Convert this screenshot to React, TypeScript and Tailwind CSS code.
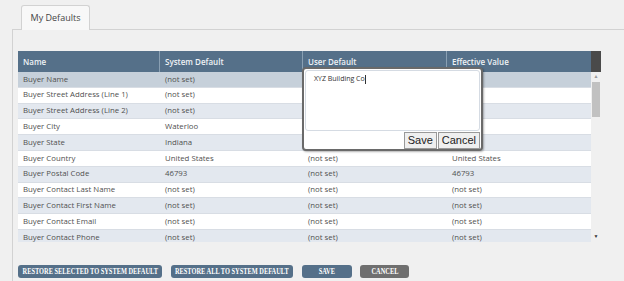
import React from "react";

const ROWS = [
  ["Buyer Name", "(not set)", "", ""],
  ["Buyer Street Address (Line 1)", "(not set)", "", ""],
  ["Buyer Street Address (Line 2)", "(not set)", "", ""],
  ["Buyer City", "Waterloo", "", ""],
  ["Buyer State", "Indiana", "", ""],
  ["Buyer Country", "United States", "(not set)", "United States"],
  ["Buyer Postal Code", "46793", "(not set)", "46793"],
  ["Buyer Contact Last Name", "(not set)", "(not set)", "(not set)"],
  ["Buyer Contact First Name", "(not set)", "(not set)", "(not set)"],
  ["Buyer Contact Email", "(not set)", "(not set)", "(not set)"],
  ["Buyer Contact Phone", "(not set)", "(not set)", "(not set)"],
];

const COLS = ["Name", "System Default", "User Default", "Effective Value"];
const WIDTHS = ["w-[142px]", "w-[143px]", "w-[144px]", "w-[144px]"];

export default function App() {
  return (
    <div
      className="w-[624px] h-[281px] bg-[#f0f0f0] overflow-hidden text-[#555]"
      style={{ fontFamily: "'Open Sans', 'Liberation Sans', sans-serif" }}
    >
      {/* Tabs */}
      <div className="pl-[21px] pt-[5px] flex">
        <div className="w-[69px] h-[25px] bg-[#f8f8f8] border border-b-0 border-[#d2d2d2] rounded-t-[3px] flex items-center justify-center text-[9px] text-[#444] -mb-px relative z-10">
          My Defaults
        </div>
      </div>

      {/* Panel */}
      <div className="ml-[12px] border-l border-t border-[#d2d2d2] pt-[21px] pl-[5px] h-[260px]">
        <div className="relative w-[583px]">
          {/* Header */}
          <div className="flex h-[21px] bg-[#557089] text-[#eef2f5] text-[8px] font-semibold">
            {COLS.map((c, i) => (
              <div
                key={c}
                className={`${WIDTHS[i]} flex items-center pl-[5px] ${i < 3 ? "border-r border-[#8aa0b3]" : ""}`}
              >
                {c}
              </div>
            ))}
            <div className="w-[10px] bg-[#4a4a4a]" />
          </div>

          {/* Body */}
          <div className="flex">
            <div className="w-[573px] h-[170px] overflow-hidden">
              {ROWS.map((r, ri) => (
                <div
                  key={r[0]}
                  className={`flex h-[15.8px] items-center text-[7.8px] text-[#505050] border-b border-[#d8dde4] ${
                    ri === 0 ? "bg-[#c6d0da]" : ri % 2 === 0 ? "bg-[#e3e8ef]" : "bg-white"
                  }`}
                >
                  {r.map((v, ci) => (
                    <div key={ci} className={`${WIDTHS[ci]} pl-[5px] whitespace-nowrap`}>
                      {v}
                    </div>
                  ))}
                </div>
              ))}
            </div>
            {/* Scrollbar */}
            <div className="w-[10px] h-[170px] flex flex-col items-center bg-[#f0f0f0]">
              <div className="h-[10px] flex items-center justify-center text-[5px] text-[#999]">▲</div>
              <div className="w-[8px] h-[35px] bg-[#c1c1c1]" />
              <div className="flex-1" />
              <div className="h-[10px] flex items-center justify-center text-[5px] text-[#333]">▼</div>
            </div>
          </div>

          {/* Popup editor */}
          <div className="absolute left-[284px] top-[16px] w-[181px] h-[84px] bg-white border-2 border-[#6a6a6a] rounded-[4px] shadow-[1px_1px_2px_rgba(0,0,0,0.3)] p-[1px]">
            <div className="h-[61px] border border-[#d5dbe3] rounded-[3px] pl-[8px] pt-[3px] text-[7px] text-[#333]">
              XYZ Building Co<span className="inline-block w-px h-[9px] bg-[#333] align-middle" />
            </div>
            <div
              className="flex justify-end mt-[1px] text-[11px] text-[#222]"
              style={{ fontFamily: "'Liberation Sans', Arial, sans-serif" }}
            >
              <div className="h-[17px] px-[3px] border border-[#999] bg-[#efefef] flex items-center">Save</div>
              <div className="h-[17px] px-[3px] border border-[#999] bg-[#efefef] flex items-center ml-px">Cancel</div>
            </div>
          </div>
        </div>

        {/* Buttons */}
        <div
          className="flex mt-[23px] text-[8.5px] font-bold text-white whitespace-nowrap"
          style={{ fontFamily: "'Liberation Serif', 'Times New Roman', serif" }}
        >
          <div className="w-[144px] h-[13px] rounded-[3px] bg-[#557089] flex items-center justify-center">
            <span className="inline-block scale-x-[0.75]">RESTORE SELECTED TO SYSTEM DEFAULT</span>
          </div>
          <div className="ml-[9px] w-[122px] h-[13px] rounded-[3px] bg-[#557089] flex items-center justify-center">
            <span className="inline-block scale-x-[0.75]">RESTORE ALL TO SYSTEM DEFAULT</span>
          </div>
          <div className="ml-[9px] w-[50px] h-[13px] rounded-[3px] bg-[#557089] flex items-center justify-center">
            <span className="inline-block scale-x-[0.75]">SAVE</span>
          </div>
          <div className="ml-[8px] w-[49px] h-[13px] rounded-[3px] bg-[#6f6f6f] flex items-center justify-center">
            <span className="inline-block scale-x-[0.75]">CANCEL</span>
          </div>
        </div>
      </div>
    </div>
  );
}
